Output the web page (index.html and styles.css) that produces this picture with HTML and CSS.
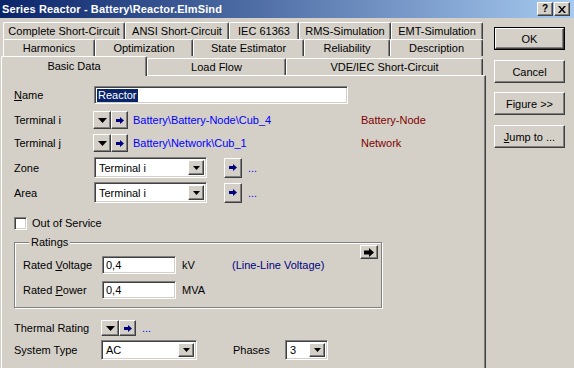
FILE: index.html
```html
<!DOCTYPE html>
<html lang="en">
<head>
  <meta charset="UTF-8" />
  <title>Series Reactor - Battery\Reactor.ElmSind</title>
  <link rel="stylesheet" href="styles.css">
</head>
<body>
  <!-- title bar -->
  <div class="titlebar">
    <span class="title">Series Reactor - Battery\Reactor.ElmSind</span>
    <div class="tb-buttons">
      <span class="tb-btn tb-help">?</span>
      <span class="tb-btn">
        <svg width="8" height="7" viewBox="0 0 8 7"><path d="M0 0h2l2 2.5L6 0h2L5 3.5 8 7H6L4 4.5 2 7H0l3-3.5z" fill="#000"/></svg>
      </span>
    </div>
  </div>

  <div class="main">
    <div class="tabctl">
      <div class="tab-row row1">
        <div class="tab">Complete Short-Circuit</div>
        <div class="tab">ANSI Short-Circuit</div>
        <div class="tab">IEC 61363</div>
        <div class="tab">RMS-Simulation</div>
        <div class="tab">EMT-Simulation</div>
      </div>
      <div class="tab-row row2">
        <div class="tab">Harmonics</div>
        <div class="tab">Optimization</div>
        <div class="tab">State Estimator</div>
        <div class="tab">Reliability</div>
        <div class="tab">Description</div>
      </div>
      <div class="tab-row row3">
        <div class="tab active">Basic Data</div>
        <div class="tab">Load Flow</div>
        <div class="tab">VDE/IEC Short-Circuit</div>
      </div>

      <div class="panel">
        <!-- name -->
        <div class="field r-name">
          <span class="lbl lbl-in"><u>N</u>ame</span>
          <div class="sunken name-input"><span class="sel">Reactor</span></div>
        </div>

        <!-- terminals -->
        <div class="field r-term-i">
          <span class="lbl">Terminal i</span>
          <span class="raised drop-btn"><svg width="9" height="5" viewBox="0 0 9 5"><path d="M0 0h9L4.5 5z"/></svg></span>
          <span class="raised go-btn"><svg width="8" height="7" viewBox="0 0 8 7"><path d="M0 2h4V0l4 3.5L4 7V5H0z" fill="#000080"/></svg></span>
          <span class="link term-link">Battery\Battery-Node\Cub_4</span>
          <span class="node">Battery-Node</span>
        </div>
        <div class="field r-term-j">
          <span class="lbl">Terminal j</span>
          <span class="raised drop-btn"><svg width="9" height="5" viewBox="0 0 9 5"><path d="M0 0h9L4.5 5z"/></svg></span>
          <span class="raised go-btn"><svg width="8" height="7" viewBox="0 0 8 7"><path d="M0 2h4V0l4 3.5L4 7V5H0z" fill="#000080"/></svg></span>
          <span class="link term-link">Battery\Network\Cub_1</span>
          <span class="node">Network</span>
        </div>

        <!-- zone / area -->
        <div class="field r-zone">
          <span class="lbl lbl-in">Zone</span>
          <div class="sunken combo zone-combo">
            <span class="combo-text">Terminal i</span>
            <span class="raised combo-btn"><svg width="7" height="4" viewBox="0 0 7 4"><path d="M0 0h7L3.5 4z"/></svg></span>
          </div>
          <span class="raised go-btn go-tall"><svg width="8" height="7" viewBox="0 0 8 7"><path d="M0 2h4V0l4 3.5L4 7V5H0z" fill="#000080"/></svg></span>
          <span class="link dots">...</span>
        </div>
        <div class="field r-area">
          <span class="lbl lbl-in">Area</span>
          <div class="sunken combo zone-combo">
            <span class="combo-text">Terminal i</span>
            <span class="raised combo-btn"><svg width="7" height="4" viewBox="0 0 7 4"><path d="M0 0h7L3.5 4z"/></svg></span>
          </div>
          <span class="raised go-btn go-tall"><svg width="8" height="7" viewBox="0 0 8 7"><path d="M0 2h4V0l4 3.5L4 7V5H0z" fill="#000080"/></svg></span>
          <span class="link dots">...</span>
        </div>

        <!-- out of service -->
        <div class="field r-check">
          <span class="sunken checkbox"></span>
          <span class="check-text">Out of Service</span>
        </div>

        <!-- ratings group -->
        <div class="group">
          <div class="group-head">
            <span class="legend">Ratings</span>
            <span class="raised small-go"><svg width="10" height="9" viewBox="0 0 10 9"><path d="M0 2.5h5V0l5 4.5L5 9V6.5H0z" fill="#000"/></svg></span>
          </div>
          <div class="field r-volt">
            <span class="lbl">Rated <u>V</u>oltage</span>
            <div class="sunken num-input">0,4</div>
            <span class="unit">kV</span>
            <span class="hint">(Line-Line Voltage)</span>
          </div>
          <div class="field r-power">
            <span class="lbl">Rated <u>P</u>ower</span>
            <div class="sunken num-input">0,4</div>
            <span class="unit">MVA</span>
          </div>
        </div>

        <!-- thermal rating -->
        <div class="field r-thermal">
          <span class="lbl lbl-wide">Thermal Rating</span>
          <span class="raised drop-btn th-btn"><svg width="9" height="5" viewBox="0 0 9 5"><path d="M0 0h9L4.5 5z"/></svg></span>
          <span class="raised go-btn th-btn"><svg width="8" height="7" viewBox="0 0 8 7"><path d="M0 2h4V0l4 3.5L4 7V5H0z" fill="#000080"/></svg></span>
          <span class="link th-dots">...</span>
        </div>

        <!-- system type / phases -->
        <div class="field r-system">
          <span class="lbl lbl-wide">System Type</span>
          <div class="sunken combo sys-combo">
            <span class="combo-text">AC</span>
            <span class="raised combo-btn"><svg width="7" height="4" viewBox="0 0 7 4"><path d="M0 0h7L3.5 4z"/></svg></span>
          </div>
          <span class="phases-lbl">Phases</span>
          <div class="sunken combo ph-combo">
            <span class="combo-text">3</span>
            <span class="raised combo-btn"><svg width="7" height="4" viewBox="0 0 7 4"><path d="M0 0h7L3.5 4z"/></svg></span>
          </div>
        </div>
      </div>
    </div>

    <!-- dialog buttons -->
    <div class="side">
      <div class="default-frame"><span class="raised dlg-btn">OK</span></div>
      <span class="raised dlg-btn b-cancel">Cancel</span>
      <span class="raised dlg-btn b-figure">Figure &gt;&gt;</span>
      <span class="raised dlg-btn b-jump"><u>J</u>ump to ...</span>
    </div>
  </div>
</body>
</html>
```

FILE: styles.css
```css
body {
  margin: 0;
  width: 574px;
  height: 368px;
  overflow: hidden;
  background: #d4d0c8;
  font: 11px "Liberation Sans", Arial, sans-serif;
  color: #000;
}
u { text-decoration: underline; text-underline-offset: 1px; }

/* title bar */
.titlebar {
  height: 18px;
  display: flex;
  align-items: center;
  justify-content: space-between;
  padding: 0 4px 0 2px;
  background: linear-gradient(to right, #0a246a, #a6caf0);
}
.title { color: #fff; font-weight: bold; font-size: 11px; letter-spacing: 0.12px; }
.tb-buttons { display: flex; gap: 1px; }
.tb-btn {
  width: 16px;
  height: 14px;
  box-sizing: border-box;
  display: flex;
  align-items: center;
  justify-content: center;
  background: #d4d0c8;
  border: 1px solid;
  border-color: #fff #404040 #404040 #fff;
  box-shadow: inset -1px -1px #808080;
}
.tb-help { font-weight: bold; font-size: 10px; line-height: 1; }

/* 3d borders */
.raised {
  box-sizing: border-box;
  display: flex;
  align-items: center;
  justify-content: center;
  background: #d4d0c8;
  border: 1px solid;
  border-color: #fff #404040 #404040 #fff;
  box-shadow: inset -1px -1px #808080;
}
.sunken {
  box-sizing: border-box;
  background: #fff;
  border: 1px solid;
  border-color: #808080 #fff #fff #808080;
  box-shadow: inset 1px 1px #404040, inset -1px -1px #d4d0c8;
}

/* layout */
.main { display: flex; padding-top: 4px; }
.tabctl { width: 485px; margin-left: 1px; }

.tab-row { display: grid; height: 17px; margin: 0 3px 0 2px; }
.row1 { grid-template-columns: 122px 104px 70px 92px 92px; }
.row2 { grid-template-columns: 92px 98px 111px 86px 93px; }
.row3 { grid-template-columns: 144px 139px 197px; height: 19px; align-items: end; }

.tab {
  box-sizing: border-box;
  height: 17px;
  display: flex;
  align-items: center;
  justify-content: center;
  border-left: 1px solid #fff;
  border-top: 1px solid #fff;
  border-right: 1px solid #404040;
  border-radius: 2px 2px 0 0;
  box-shadow: inset -1px 0 #808080;
  background: #d4d0c8;
  white-space: nowrap;
}
.tab.active {
  height: 20px;
  margin: 0 0 -1px -2px;
  position: relative;
  z-index: 1;
  padding-bottom: 2px;
}

.panel {
  height: 300px;
  box-sizing: border-box;
  padding-left: 12px;
  border-left: 1px solid #fff;
  border-top: 1px solid #fff;
  border-right: 1px solid #404040;
  box-shadow: inset -1px 0 #808080;
}

.field { display: flex; align-items: center; height: 18px; }
.lbl { width: 79px; flex: none; }
.lbl-in { width: 80px; }
.lbl-wide { width: 87px; }

.r-name { margin-top: 10px; }
.r-term-i { margin-top: 7px; }
.r-term-j { margin-top: 5px; }
.r-zone { margin-top: 5px; height: 21px; }
.r-area { margin-top: 4px; height: 21px; }
.r-check { margin-top: 13px; height: 14px; }
.r-thermal { margin-top: 11px; height: 18px; }
.r-system { margin-top: 3px; height: 20px; }

.name-input { width: 254px; height: 18px; padding: 2px 0 0 2px; }
.sel { background: #0a246a; color: #fff; padding: 0 1px; display: inline-block; line-height: 13px; }

.drop-btn { width: 18px; height: 18px; }
.go-btn { width: 17px; height: 18px; }
.go-tall { height: 20px; width: 18px; margin-left: 17px; }
.th-btn { height: 16px; }

.link { color: #0000ff; }
.term-link { width: 228px; margin-left: 5px; white-space: nowrap; }
.node { color: #800000; }
.dots { margin-left: 6px; }
.th-dots { margin-left: 6px; }

.combo {
  display: flex;
  align-items: center;
  justify-content: space-between;
  padding: 2px;
}
.combo-text { padding-left: 2px; }
.combo-btn { width: 16px; height: 100%; }
.zone-combo { width: 113px; height: 21px; }
.sys-combo { width: 96px; height: 20px; }
.ph-combo { width: 43px; height: 20px; }
.phases-lbl { margin-left: 36px; width: 52px; }

.checkbox { width: 13px; height: 13px; }
.check-text { margin-left: 5px; }

/* ratings group */
.group {
  width: 368px;
  height: 66px;
  margin-top: 12px;
  box-sizing: border-box;
  padding-left: 8px;
  border: 1px solid #808080;
  box-shadow: inset 1px 1px #fff, 1px 1px #fff;
}
.group-head { display: flex; justify-content: space-between; align-items: flex-start; height: 13px; }
.legend { margin: -7px 0 0 6px; padding: 0 2px; background: #d4d0c8; line-height: 13px; }
.small-go { width: 18px; height: 14px; margin: 2px 3px 0 0; }
.r-volt { margin-top: 0; }
.r-power { margin-top: 7px; }
.num-input { width: 74px; height: 18px; padding: 2px 0 0 3px; }
.unit { margin-left: 6px; width: 50px; }
.hint { color: #000080; }

/* dialog buttons */
.side { display: flex; flex-direction: column; margin-left: 8px; padding-top: 5px; }
.dlg-btn { width: 71px; height: 23px; }
.default-frame { border: 1px solid #000; width: 71px; height: 23px; box-sizing: border-box; }
.default-frame .dlg-btn { width: 69px; height: 21px; }
.b-cancel { margin-top: 10px; }
.b-figure { margin-top: 9px; }
.b-jump { margin-top: 10px; }
```
